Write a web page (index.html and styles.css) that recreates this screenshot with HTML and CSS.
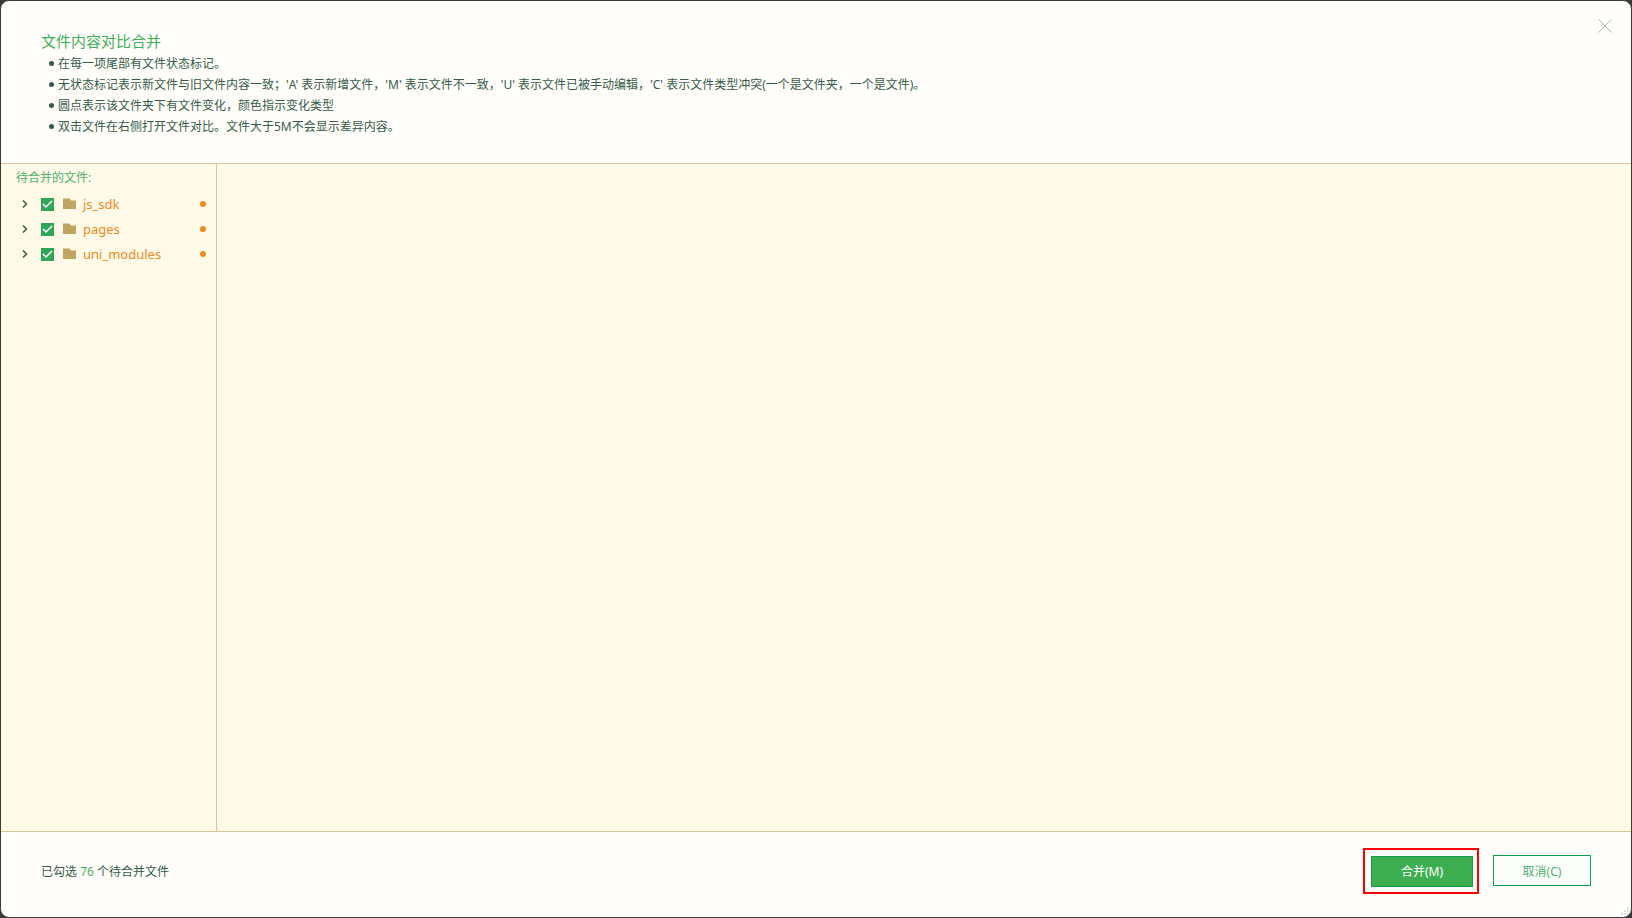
FILE: index.html
```html
<!DOCTYPE html>
<html lang="zh-CN">
<head>
    <meta charset="UTF-8">
    <title>文件内容对比合并</title>
    <link rel="stylesheet" href="styles.css">
</head>
<body>
    <div class="dialog">
        <header class="header">
            <div class="intro">
                <h1 class="title">文件内容对比合并</h1>
                <ul class="tips">
                    <li>在每一项尾部有文件状态标记。</li>
                    <li>无状态标记表示新文件与旧文件内容一致；'A' 表示新增文件，'M' 表示文件不一致，'U' 表示文件已被手动编辑，'C' 表示文件类型冲突(一个是文件夹，一个是文件)。</li>
                    <li>圆点表示该文件夹下有文件变化，颜色指示变化类型</li>
                    <li>双击文件在右侧打开文件对比。文件大于5M不会显示差异内容。</li>
                </ul>
            </div>
            <button class="close" type="button" aria-label="关闭">
                <svg width="14" height="14" viewBox="0 0 14 14"><path d="M.5.5l13 13M13.5.5l-13 13" fill="none" stroke="#b4b4b2"/></svg>
            </button>
        </header>

        <main class="main">
            <aside class="sidebar">
                <h2 class="sidebar-title">待合并的文件:</h2>
                <ul class="tree">
                    <li class="tree-row">
                        <button class="expand" type="button" aria-label="展开 js_sdk">
                            <svg width="6" height="8" viewBox="0 0 6 8"><path d="M1 .5L4.500 4 1 7.500" fill="none" stroke="#355b48" stroke-width="1.500"/></svg>
                        </button>
                        <input class="check" type="checkbox" id="f1" checked>
                        <label class="name" for="f1">
                            <svg width="14" height="12" viewBox="0 0 14 12"><path d="M0 .5h6.500l1.500 2h5v8.500H0z" fill="#c0a562"/></svg>
                            js_sdk
                        </label>
                        <span class="dot"></span>
                    </li>
                    <li class="tree-row">
                        <button class="expand" type="button" aria-label="展开 pages">
                            <svg width="6" height="8" viewBox="0 0 6 8"><path d="M1 .5L4.500 4 1 7.500" fill="none" stroke="#355b48" stroke-width="1.500"/></svg>
                        </button>
                        <input class="check" type="checkbox" id="f2" checked>
                        <label class="name" for="f2">
                            <svg width="14" height="12" viewBox="0 0 14 12"><path d="M0 .5h6.500l1.500 2h5v8.500H0z" fill="#c0a562"/></svg>
                            pages
                        </label>
                        <span class="dot"></span>
                    </li>
                    <li class="tree-row">
                        <button class="expand" type="button" aria-label="展开 uni_modules">
                            <svg width="6" height="8" viewBox="0 0 6 8"><path d="M1 .5L4.500 4 1 7.500" fill="none" stroke="#355b48" stroke-width="1.500"/></svg>
                        </button>
                        <input class="check" type="checkbox" id="f3" checked>
                        <label class="name" for="f3">
                            <svg width="14" height="12" viewBox="0 0 14 12"><path d="M0 .5h6.500l1.500 2h5v8.500H0z" fill="#c0a562"/></svg>
                            uni_modules
                        </label>
                        <span class="dot"></span>
                    </li>
                </ul>
            </aside>
            <section class="diff"></section>
        </main>

        <footer class="footer">
            <p class="summary">已勾选 <span class="count">76</span> 个待合并文件</p>
            <div class="highlight">
                <button class="btn btn-primary" type="button">合并(M)</button>
            </div>
            <button class="btn" type="button">取消(C)</button>
            <svg class="grip" width="9" height="9" viewBox="0 0 9 9"><path d="M6 0h2v2H6zM3 3h2v2H3zM6 3h2v2H6zM0 6h2v2H0zM3 6h2v2H3zM6 6h2v2H6z" fill="#dededc"/></svg>
        </footer>
    </div>
</body>
</html>
```
FILE: styles.css
```css
* {
    box-sizing: border-box;
}
body {
    margin: 0;
    background: #3c3b3b;
    font-family: "Noto Sans", "Noto Sans CJK SC", sans-serif;
    font-size: 12px;
    color: #355b48;
}
h1, h2, ul, p {
    margin: 0;
    padding: 0;
    font-weight: normal;
}
ul {
    list-style: none;
}
button {
    font: inherit;
    padding: 0;
    border: none;
    background: none;
    cursor: pointer;
}
svg {
    display: block;
}
.dialog {
    display: flex;
    flex-direction: column;
    height: 100vh;
    border: 1px solid #3c3b3b;
    border-radius: 9px;
    background: #fffefa;
    overflow: hidden;
}

/* header */
.header {
    display: flex;
    justify-content: space-between;
    align-items: flex-start;
    padding: 16px 15px 26px 40px;
    border-bottom: 1px solid #d6c89c;
}
.intro {
    padding-top: 14px;
}
.title {
    padding-bottom: 2px;
    font-size: 15px;
    line-height: 20px;
    color: #3fae58;
}
.tips li {
    display: flex;
    align-items: center;
    gap: 4px;
    padding-left: 8px;
    line-height: 21px;
}
.tips li::before {
    content: "";
    flex: none;
    width: 5px;
    height: 5px;
    border-radius: 50%;
    background: #355b48;
}
.close {
    padding: 2px 4px;
}

/* file tree */
.main {
    display: flex;
    flex: 1;
    min-height: 0;
    background: #fff9e8;
}
.sidebar {
    width: 216px;
    border-right: 1px solid #d6c89c;
}
.sidebar-title {
    padding-left: 15px;
    font-size: 12px;
    line-height: 28px;
    color: #4fb06c;
}
.tree-row {
    display: flex;
    align-items: center;
    height: 25px;
    padding: 0 10px 1px 20px;
}
.expand {
    width: 20px;
}
.expand svg {
    margin: 0 auto;
}
.check {
    appearance: none;
    width: 13px;
    height: 13px;
    margin: 0 9px 0 0;
    background: #fff;
    border: 1px solid #30a659;
}
.check:checked {
    background: #30a659 url("data:image/svg+xml,%3Csvg xmlns='http://www.w3.org/2000/svg' viewBox='0 0 11 11'%3E%3Cpath d='M1 5l3 3 6-6' fill='none' stroke='white' stroke-width='1.500'/%3E%3C/svg%3E") center / 11px no-repeat;
}
.expand {
    padding-right: 12px;
}
.name {
    display: flex;
    align-items: center;
    flex: 1;
    gap: 6px;
    font-size: 13px;
    color: #ec8c1c;
}
.dot {
    width: 6px;
    height: 6px;
    border-radius: 50%;
    background: #ec8c1c;
}
.diff {
    flex: 1;
}

/* footer */
.footer {
    position: relative;
    display: flex;
    align-items: center;
    gap: 14px;
    height: 86px;
    padding: 0 40px 8px;
    border-top: 1px solid #d6c89c;
}
.summary {
    flex: 1;
}
.count {
    color: #4fb06c;
}
.highlight {
    padding: 6px 4px 5px 6px;
    border: 2px solid #f00;
}
.btn {
    width: 98px;
    height: 31px;
    border: 1px solid #109c4c;
    background: #fafffa;
    color: #4fb06c;
}
.btn-primary {
    display: block;
    width: 102px;
    background: #3dae50;
    color: #fff;
}
.grip {
    position: absolute;
    right: 1px;
    bottom: 1px;
}
```
